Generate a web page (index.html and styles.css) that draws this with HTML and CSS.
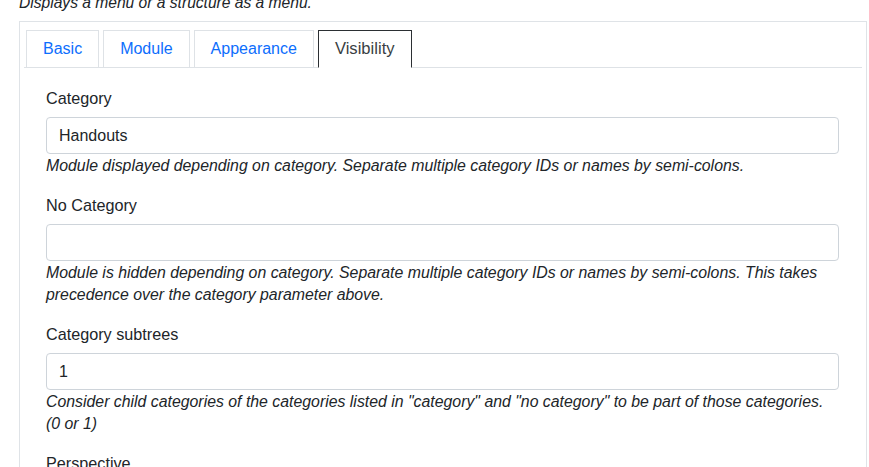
FILE: index.html
```html
<!DOCTYPE html>
<html>
<head>
<meta charset="utf-8">
<link rel="stylesheet" href="styles.css">
</head>
<body>
<div class="page">
  <p class="desc">Displays a menu or a structure as a menu.</p>
  <div class="panel">
    <ul class="tabs">
      <li class="tab">Basic</li>
      <li class="tab">Module</li>
      <li class="tab">Appearance</li>
      <li class="tab active">Visibility</li>
    </ul>
    <div class="tab-content">
      <div class="field">
        <label class="label">Category</label>
        <div class="input">Handouts</div>
        <p class="help">Module displayed depending on category. Separate multiple category IDs or names by semi-colons.</p>
      </div>
      <div class="field">
        <label class="label">No Category</label>
        <div class="input"></div>
        <p class="help">Module is hidden depending on category. Separate multiple category IDs or names by semi-colons. This takes precedence over the category parameter above.</p>
      </div>
      <div class="field">
        <label class="label">Category subtrees</label>
        <div class="input">1</div>
        <p class="help">Consider child categories of the categories listed in "category" and "no category" to be part of those categories. (0 or 1)</p>
      </div>
      <div class="field">
        <label class="label">Perspective</label>
      </div>
    </div>
  </div>
</div>
</body>
</html>
```
FILE: styles.css
```css
html, body {
  margin: 0;
  padding: 0;
  background: #fff;
}
body {
  font-family: "Liberation Sans", Arial, sans-serif;
  color: #212529;
  overflow: hidden;
}
.page {
  padding-left: 19px;
  width: 848px;
}
.desc {
  margin: -8px 0 7px 0;
  font-size: 15.6px;
  line-height: 22px;
  font-style: italic;
  color: #212529;
}
.panel {
  border: 1px solid #dfe3e7;
  padding: 8px 4px 0 4px;
  height: 600px;
}
.tabs {
  list-style: none;
  margin: 0;
  padding: 0 0 0 2px;
  display: flex;
  gap: 4px;
  border-bottom: 1px solid #dee2e6;
}
.tab {
  padding: 0 16px;
  display: flex;
  align-items: center;
  font-size: 16px;
  color: #0d6efd;
  border: 1px solid #dee2e6;
  border-bottom: none;
  box-sizing: border-box;
  height: 37px;
}
.tab.active {
  color: #3a3f44;
  border-color: #2b2f33;
  background: #fff;
  border-bottom: 1px solid #fff;
  margin-bottom: -1px;
  height: 38px;
  font-size: 16.6px;
}
.tab-content {
  padding: 18px 23px 0 22px;
}
.field {
  margin-bottom: 16px;
}
.label {
  display: block;
  font-size: 16.2px;
  line-height: 24px;
  margin-bottom: 7px;
}
.input {
  height: 37px;
  box-sizing: border-box;
  border: 1px solid #ced4da;
  border-radius: 4px;
  padding: 0 12px;
  display: flex;
  align-items: center;
  font-size: 16px;
  color: #212529;
}
.help {
  margin: 1px 0 0 0;
  font-size: 15.85px;
  line-height: 22px;
  font-style: italic;
  color: #212529;
}
```
